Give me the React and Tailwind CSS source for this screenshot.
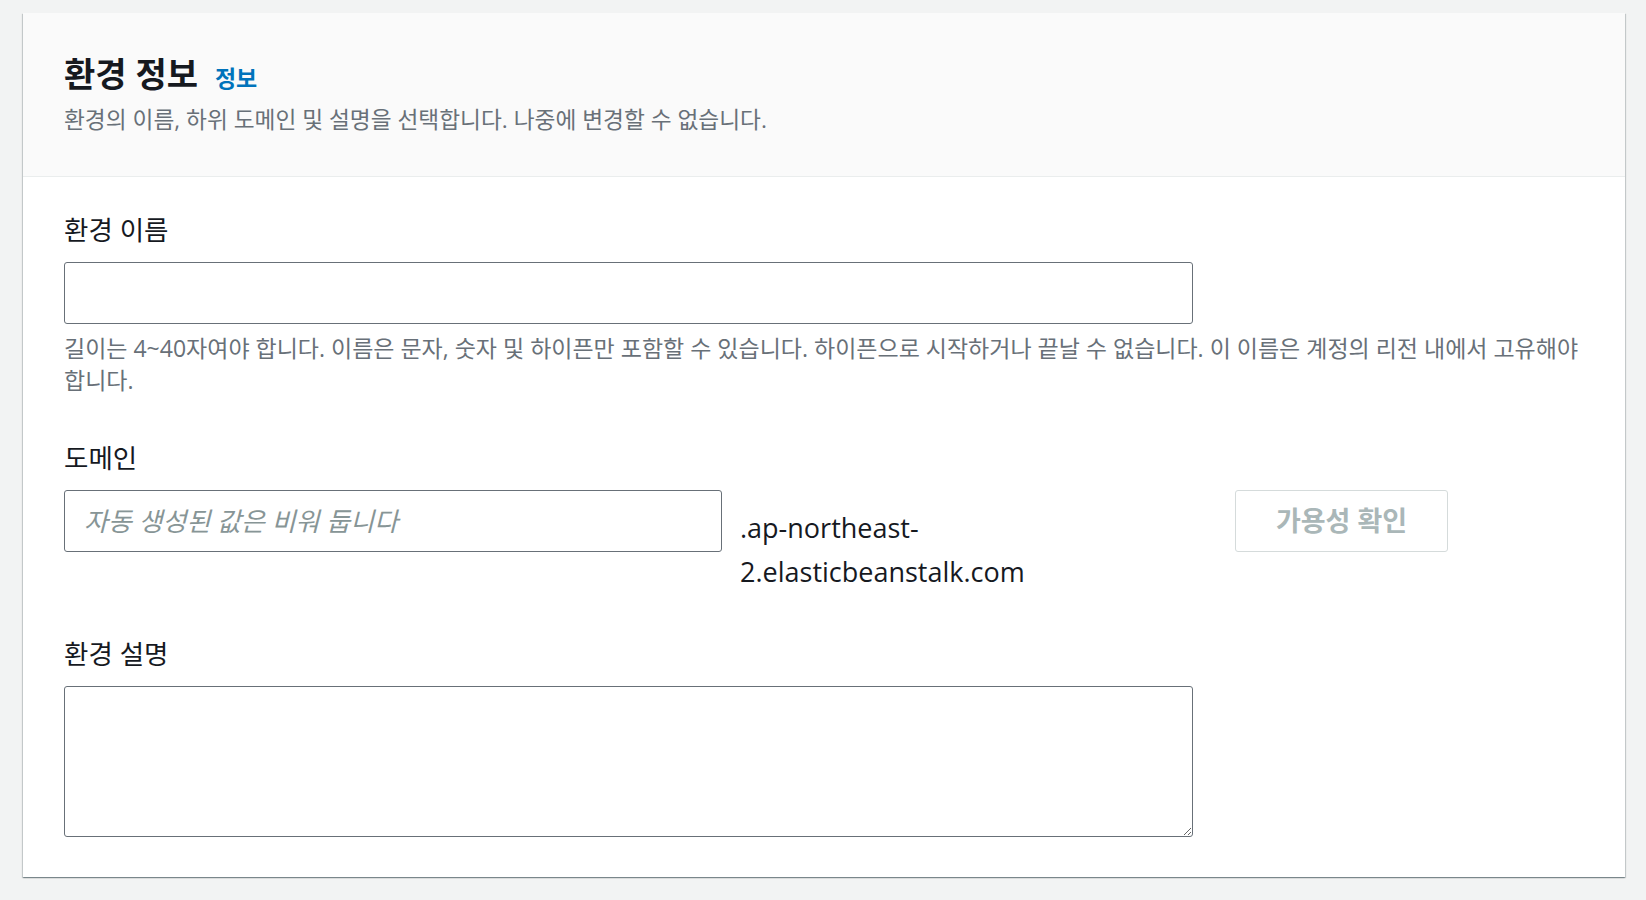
import React, { useState } from 'react';

const font = "font-['Open_Sans','Noto_Sans_CJK_KR',sans-serif]";

const Label = ({ children }) => (
  <div className="text-[26.5px] leading-[32px] text-[#16191f] mb-[16px]">{children}</div>
);

const EnvironmentInfo = () => {
  const [name, setName] = useState('');
  const [domain, setDomain] = useState('');
  const [description, setDescription] = useState('');

  return (
    <div className="bg-white shadow-[0_1px_1px_0_rgba(0,28,36,0.3),1px_1px_1px_0_rgba(0,28,36,0.15),-1px_1px_1px_0_rgba(0,28,36,0.15)]">
      <div className="bg-[#fafafa] border-b border-[#eaeded] px-[41px] pt-[41px] pb-[40px]">
        <div className="flex items-baseline gap-[17px] h-[40px] leading-[40px]">
          <h2 className="text-[34px] leading-[40px] font-bold text-[#16191f]">환경 정보</h2>
          <a href="#" className="text-[23px] leading-[40px] font-bold text-[#0073bb]">정보</a>
        </div>
        <p className="mt-[10px] text-[22.7px] leading-[32px] text-[#687078]">
          환경의 이름, 하위 도메인 및 설명을 선택합니다. 나중에 변경할 수 없습니다.
        </p>
      </div>

      <div className="px-[41px] pt-[37px] pb-[40px]">
        <Label>환경 이름</Label>
        <input
          type="text"
          value={name}
          onChange={(e) => setName(e.target.value)}
          className="block w-[1129px] h-[62px] px-[19px] text-[26px] border border-[#687078] rounded-[3px] bg-white outline-none"
        />
        <p className="mt-[9px] text-[23px] leading-[31.5px] text-[#687078]">
          길이는 4~40자여야 합니다. 이름은 문자, 숫자 및 하이픈만 포함할 수 있습니다. 하이픈으로 시작하거나 끝날 수 없습니다. 이 이름은 계정의 리전 내에서 고유해야 합니다.
        </p>

        <div className="mt-[46px]">
          <Label>도메인</Label>
          <div className="flex items-start">
            <input
              type="text"
              value={domain}
              onChange={(e) => setDomain(e.target.value)}
              placeholder="자동 생성된 값은 비워 둡니다"
              className="block w-[658px] h-[62px] px-[19px] text-[26px] italic text-[#16191f] placeholder:text-[#879596] border border-[#687078] rounded-[3px] bg-white outline-none"
            />
            <div className="ml-[18px] mt-[16px] w-[440px] text-[27px] leading-[44px] text-[#16191f] font-['Open_Sans',sans-serif]">
              .ap-northeast-2.elasticbeanstalk.com
            </div>
            <button
              disabled
              className="ml-[55px] w-[213px] h-[62px] border border-[#d5dbdb] rounded-[3px] bg-white text-[27px] font-bold text-[#aab7b8]"
            >
              가용성 확인
            </button>
          </div>
        </div>

        <div className="mt-[44px]">
          <Label>환경 설명</Label>
          <textarea
            value={description}
            onChange={(e) => setDescription(e.target.value)}
            className="block w-[1129px] h-[151px] px-[19px] py-[8px] text-[26px] border border-[#687078] rounded-[3px] bg-white outline-none"
          />
        </div>
      </div>
    </div>
  );
};

export default function App() {
  return (
    <div className={`min-h-screen bg-[#f2f3f3] pt-[13px] pl-[23px] pr-[21px] ${font}`}>
      <EnvironmentInfo />
    </div>
  );
}
